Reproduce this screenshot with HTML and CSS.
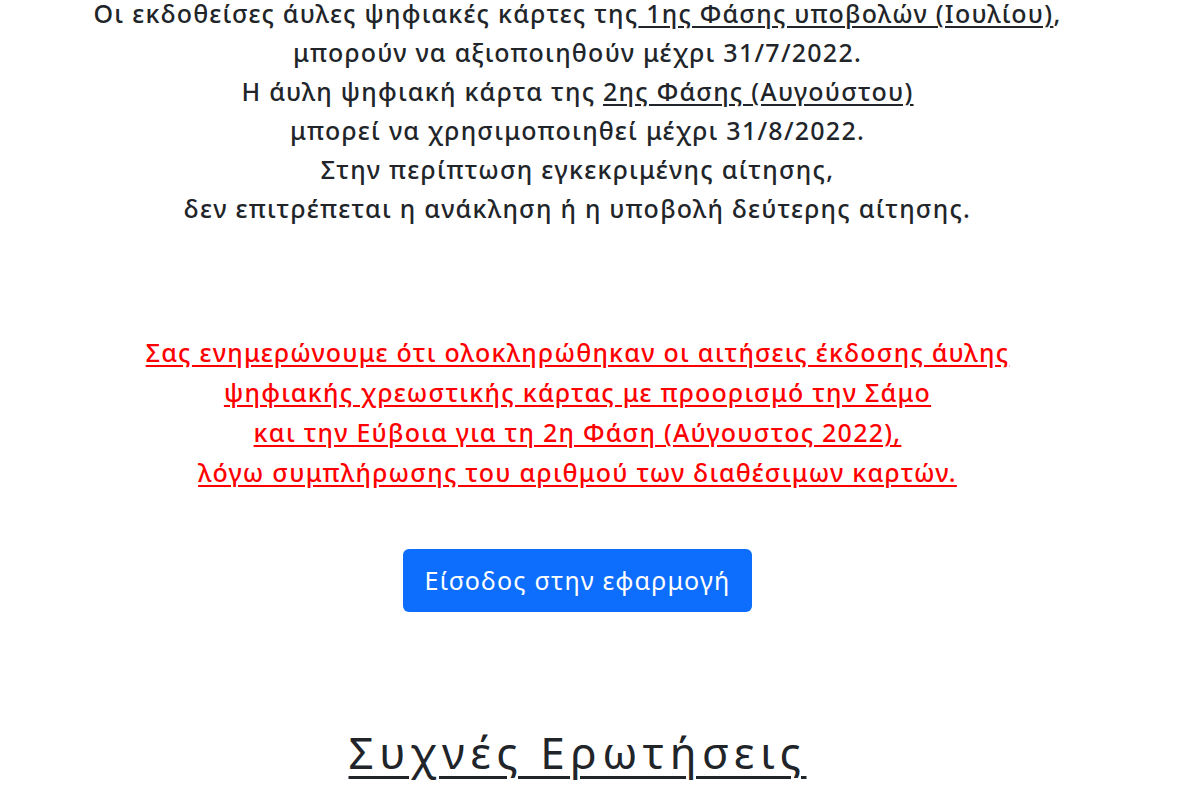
FILE: index.html
```html
<!DOCTYPE html>
<html lang="el">
<head>
    <meta charset="UTF-8">
    <meta name="viewport" content="width=device-width, initial-scale=1.0">
    <title>Άυλη ψηφιακή κάρτα</title>
    <link rel="stylesheet" href="styles.css">
</head>
<body>
    <main class="main-content">
        <section class="info-text">
            <p>Οι εκδοθείσες άυλες ψηφιακές κάρτες της<u> 1ης Φάσης υποβολών (Ιουλίου)</u>,</p>
            <p>μπορούν να αξιοποιηθούν μέχρι 31/7/2022.</p>
            <p>Η άυλη ψηφιακή κάρτα της <u>2ης Φάσης (Αυγούστου)</u></p>
            <p>μπορεί να χρησιμοποιηθεί μέχρι 31/8/2022.</p>
            <p>Στην περίπτωση εγκεκριμένης αίτησης,</p>
            <p>δεν επιτρέπεται η ανάκληση ή η υποβολή δεύτερης αίτησης.</p>
        </section>

        <section class="notice-text">
            <p>Σας ενημερώνουμε ότι ολοκληρώθηκαν οι αιτήσεις έκδοσης άυλης</p>
            <p>ψηφιακής χρεωστικής κάρτας με προορισμό την Σάμο</p>
            <p>και την Εύβοια για τη 2η Φάση (Αύγουστος 2022),</p>
            <p>λόγω συμπλήρωσης του αριθμού των διαθέσιμων καρτών.</p>
        </section>

        <a href="#" class="login-button">Είσοδος στην εφαρμογή</a>

        <h2 class="faq-title">Συχνές Ερωτήσεις</h2>
    </main>
</body>
</html>
```

FILE: styles.css
```css
* {
    margin: 0;
    padding: 0;
    box-sizing: border-box;
}

body {
    font-family: 'Noto Sans', 'Open Sans', sans-serif;
    color: #212529;
    background-color: white;
}

.main-content {
    width: 1155px;
    display: flex;
    flex-direction: column;
    align-items: center;
    text-align: center;
}

.info-text {
    margin-top: -6px;
    font-size: 25px;
    font-weight: 500;
    letter-spacing: 1.25px;
    line-height: 39px;
}

.info-text u {
    text-underline-offset: 3px;
}

.notice-text {
    margin-top: 104px;
    font-size: 25px;
    font-weight: 500;
    letter-spacing: 1.25px;
    line-height: 40px;
    color: #ff0000;
    text-decoration: underline;
    text-underline-offset: 3px;
}

.login-button {
    margin-top: 57px;
    display: inline-block;
    padding: 12px 22px;
    background-color: #0d6efd;
    color: white;
    font-size: 25px;
    letter-spacing: 1.2px;
    line-height: 39px;
    border-radius: 6px;
    text-decoration: none;
}

.faq-title {
    margin-top: 110px;
    font-size: 44px;
    font-weight: 400;
    letter-spacing: 5.6px;
    line-height: 60px;
    text-decoration: underline;
    text-decoration-thickness: 3px;
    text-underline-offset: 7px;
}
```
